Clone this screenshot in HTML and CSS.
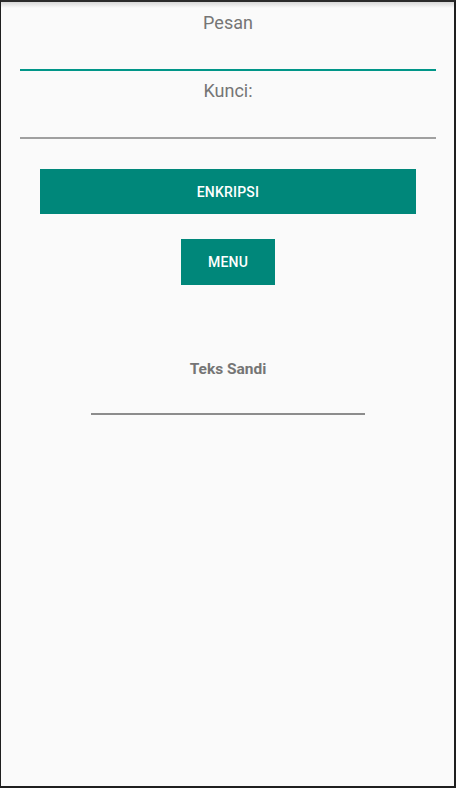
FILE: index.html
```html
<!DOCTYPE html>
<html lang="id">
<head>
<meta charset="utf-8">
<title>Enkripsi</title>
<link rel="stylesheet" href="styles.css">
</head>
<body>
<div class="screen">
  <div class="topshade"></div>
  <main class="content">
    <label class="field-label first">Pesan</label>
    <div class="input focused"></div>
    <label class="field-label">Kunci:</label>
    <div class="input"></div>
    <button class="btn wide">ENKRIPSI</button>
    <button class="btn small">MENU</button>
    <div class="result-label">Teks Sandi</div>
    <div class="result-field"></div>
  </main>
</div>
</body>
</html>
```
FILE: styles.css
```css
html, body {
  margin: 0;
  padding: 0;
  background: #1f1f1f;
}
.screen {
  box-sizing: border-box;
  width: 456px;
  height: 788px;
  background: #fafafa;
  border-top: 2px solid #2a2a2a;
  border-left: 1px solid #1f1f1f;
  border-right: 2px solid #1f1f1f;
  border-bottom: 2px solid #1f1f1f;
  display: flex;
  flex-direction: column;
  font-family: Roboto, "Noto Sans", sans-serif;
}
.topshade {
  height: 6px;
  background: linear-gradient(rgba(0,0,0,0.14), rgba(0,0,0,0));
}
.content {
  display: flex;
  flex-direction: column;
  padding: 0 18px 0 19px;
}
.field-label {
  display: block;
  text-align: center;
  font-size: 18px;
  line-height: 22px;
  color: #757575;
  margin-top: 9px;
}
.field-label.first {
  margin-top: 4px;
}
.input {
  height: 35px;
  border-bottom: 2px solid #a0a0a0;
}
.input.focused {
  border-bottom-color: #009688;
}
.btn {
  display: block;
  border: 0;
  background: #00877a;
  color: #ffffff;
  font-family: Roboto, "Noto Sans", sans-serif;
  font-weight: 500;
  font-size: 14px;
  letter-spacing: 0.2px;
  padding: 0;
}
.btn.wide {
  margin: 30px 20px 0;
  height: 45px;
}
.btn.small {
  align-self: center;
  margin-top: 25px;
  width: 94px;
  height: 46px;
}
.result-label {
  margin-top: 75px;
  text-align: center;
  font-size: 15.5px;
  line-height: 19px;
  font-weight: 700;
  color: #757575;
}
.result-field {
  align-self: center;
  width: 274px;
  height: 34px;
  border-bottom: 2px solid #8c8c8c;
}
```
